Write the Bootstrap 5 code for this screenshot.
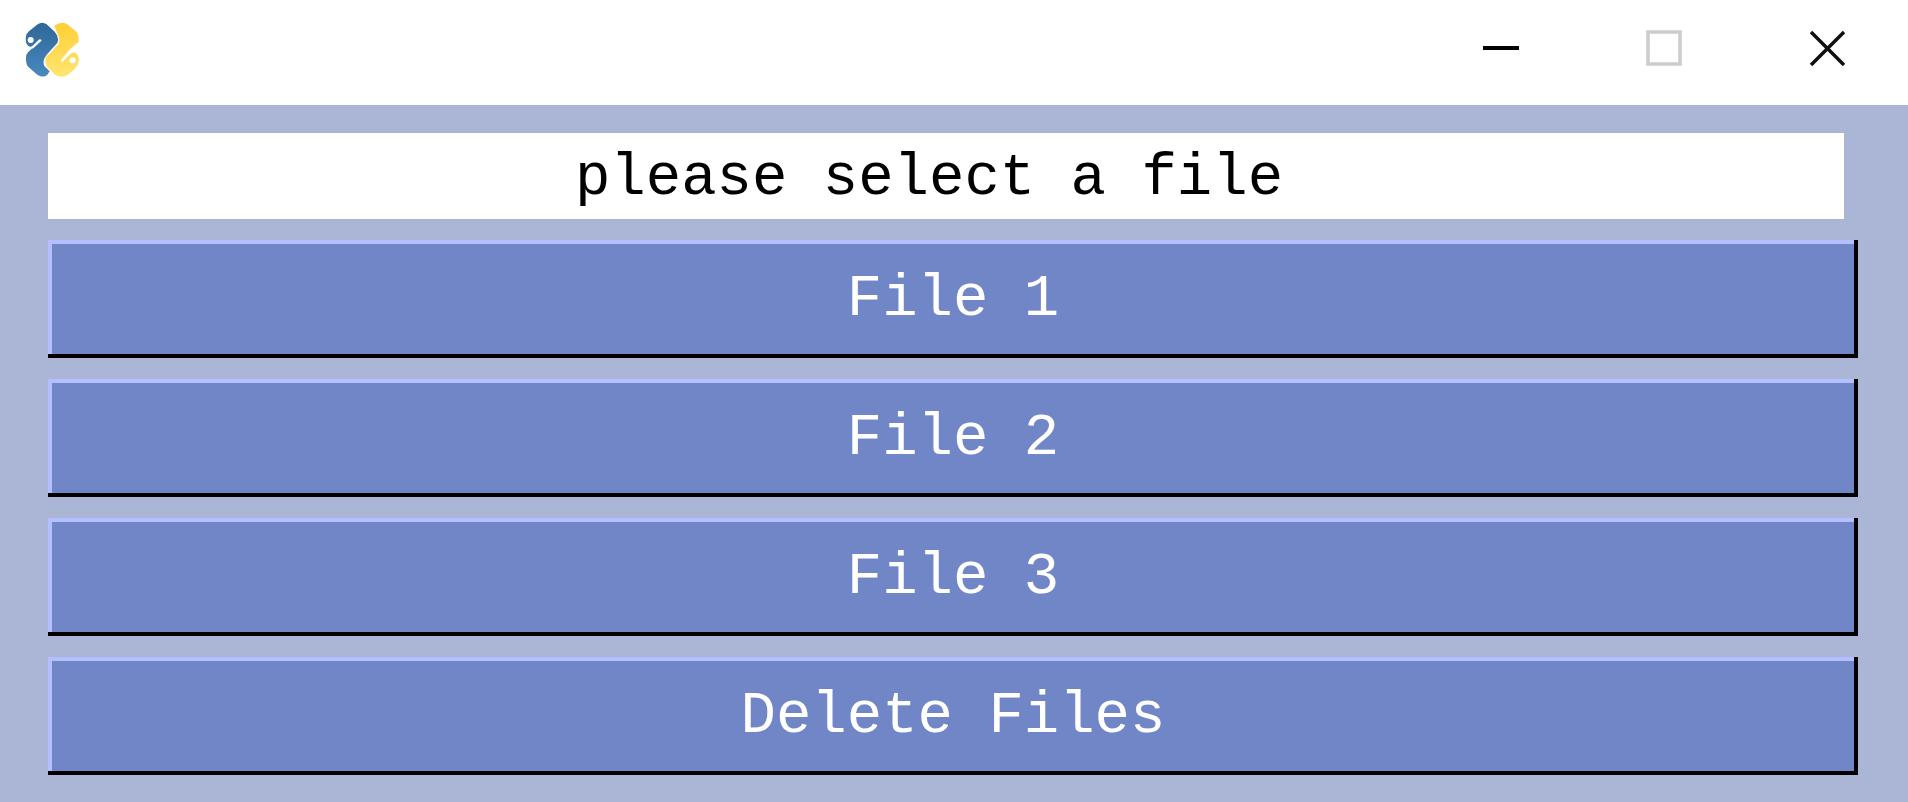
<!DOCTYPE html>
<html lang="en">
<head>
<meta charset="utf-8">
<meta name="viewport" content="width=device-width, initial-scale=1">
<title>File picker</title>
<link href="https://cdn.jsdelivr.net/npm/bootstrap@5.3.0/dist/css/bootstrap.min.css" rel="stylesheet">
<style>
  body { background: #abb5d5; font-family: "Courier New", "Liberation Mono", monospace; }
  .titlebar { background: #fff; height: 105px; padding-left: 25px; }
  .win-controls { gap: 1px; height: 96px; }
  .win-btn { width: 162px; border: 0; background: transparent; padding: 0; }
  .app-logo { width: 55px; height: 55px; margin-bottom: 6px; }
  .picker { padding: 28px 50px 26px 48px; gap: 21px; }
  .prompt-box, .file-btn { font-size: 59px; line-height: 1; border-radius: 0; border: 0; }
  .prompt-box { height: 86px; margin-right: 14px; padding: 4px 34px 0 0; color: #000; background: #fff; outline: 0; min-width: 0; }
  .file-btn { height: 118px; padding: 0; color: #fff; background: #7186c7;
    box-shadow: inset -4px -4px 0 #000, inset 4px 4px 0 #b3bfff; }
  .file-btn:active { box-shadow: inset 4px 4px 0 #000, inset -4px -4px 0 #b3bfff; }
</style>
</head>
<body>
<header class="titlebar d-flex justify-content-between align-items-center">
  <svg class="app-logo" viewBox="75 66 165 165" aria-hidden="true">
    <defs>
      <linearGradient id="blue" x1="0" y1="0" x2="0" y2="1"><stop offset="0" stop-color="#2f6698"/><stop offset="1" stop-color="#4889bf"/></linearGradient>
      <linearGradient id="gold" x1="0" y1="0" x2="0" y2="1"><stop offset="0" stop-color="#ffcf35"/><stop offset="1" stop-color="#ffe570"/></linearGradient>
    </defs>
    <path fill="url(#gold)" d="M163 78Q185 60 204 74L229 95Q237 103 236 125L210 148L184 179Q181 184 187 185L208 163Q220 153 231 162Q238 170 236 185Q235 195 225 206L204 224Q185 236 166 225L142 202Q132 185 138 172L176 132Q182 116 170 96Z"/>
    <path fill="url(#blue)" d="M113 73Q126 63 140 73L164 95Q179 111 172 129L140 164Q126 181 133 198L149 214Q143 226 135 229Q124 232 112 224L86 202Q78 195 78 178Q77 164 84 157L123 120L118 118L98 137Q91 143 84 137Q75 130 78 109Q79 101 87 94Z"/>
    <g stroke="#fff" stroke-width="5" stroke-linecap="round"><path d="M98 143L122 121M187 182L221 149"/></g>
    <circle cx="92" cy="120" r="9" fill="#fff"/><circle cx="218" cy="181" r="9" fill="#fff"/>
  </svg>
  <div class="win-controls d-flex align-self-start">
    <button type="button" class="win-btn" aria-label="Minimize"><svg width="36" height="36" viewBox="0 0 36 36"><path d="M0 18H36" stroke="#000" stroke-width="4"/></svg></button>
    <button type="button" class="win-btn" aria-label="Maximize" disabled><svg width="36" height="36" viewBox="0 0 36 36"><path d="M2 2H34V34H2Z" fill="none" stroke="#ccc" stroke-width="3.5"/></svg></button>
    <button type="button" class="win-btn" aria-label="Close"><svg width="36" height="36" viewBox="0 0 36 36"><path d="M2 2L35 35M35 2L2 35" stroke="#111" stroke-width="3.5"/></svg></button>
  </div>
</header>
<main class="picker d-flex flex-column">
  <input class="prompt-box text-center" type="text" value="please select a file" aria-label="Selected file" readonly>
  <button type="button" class="file-btn">File 1</button>
  <button type="button" class="file-btn">File 2</button>
  <button type="button" class="file-btn">File 3</button>
  <button type="button" class="file-btn">Delete Files</button>
</main>
<script src="https://cdn.jsdelivr.net/npm/bootstrap@5.3.0/dist/js/bootstrap.bundle.min.js"></script>
</body>
</html>
